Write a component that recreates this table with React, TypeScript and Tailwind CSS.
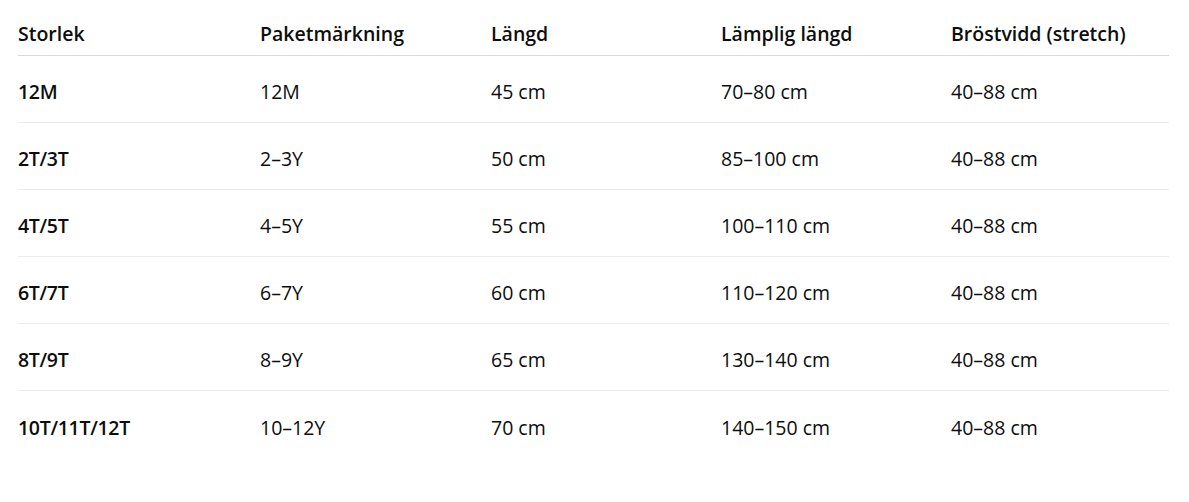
const headers = ["Storlek", "Paketmärkning", "Längd", "Lämplig längd", "Bröstvidd (stretch)"];

const rows = [
  ["12M", "12M", "45 cm", "70–80 cm", "40–88 cm"],
  ["2T/3T", "2–3Y", "50 cm", "85–100 cm", "40–88 cm"],
  ["4T/5T", "4–5Y", "55 cm", "100–110 cm", "40–88 cm"],
  ["6T/7T", "6–7Y", "60 cm", "110–120 cm", "40–88 cm"],
  ["8T/9T", "8–9Y", "65 cm", "130–140 cm", "40–88 cm"],
  ["10T/11T/12T", "10–12Y", "70 cm", "140–150 cm", "40–88 cm"],
];

const cols = "grid grid-cols-[242px_231px_230px_230px_1fr]";

export default function App() {
  return (
    <div className="min-h-screen bg-white pl-[18px] pr-[20px] pt-[12px] font-['Open_Sans',sans-serif] text-[19.5px] text-[#0d0d0d]">
      <div className={`${cols} h-[44px] items-center border-b border-[#d9d9d9] font-semibold`}>
        {headers.map((h) => (
          <div key={h}>{h}</div>
        ))}
      </div>
      {rows.map((r, i) => (
        <div
          key={r[0]}
          className={`${cols} h-[67px] items-center pt-[6px] ${i < rows.length - 1 ? "border-b border-[#ececec]" : ""}`}
        >
          {r.map((c, j) => (
            <div key={j} className={j === 0 ? "font-semibold tracking-[-0.3px]" : ""}>
              {c}
            </div>
          ))}
        </div>
      ))}
    </div>
  );
}
